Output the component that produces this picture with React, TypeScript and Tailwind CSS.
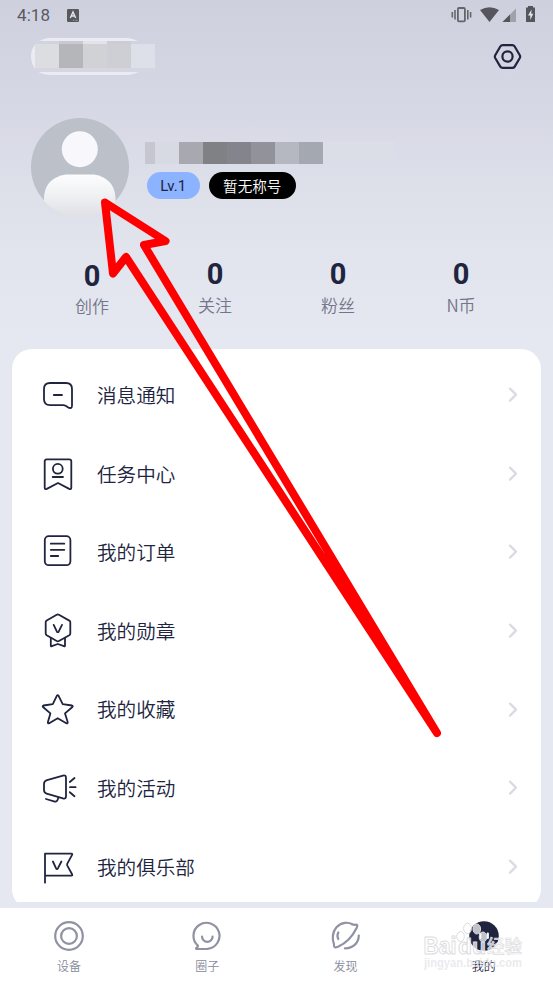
import type { ReactNode } from "react";

const INK = "#20243f";

const stats = [
  { value: "0", label: "创作", shift: "pt-[1.500px]" },
  { value: "0", label: "关注", shift: "" },
  { value: "0", label: "粉丝", shift: "" },
  { value: "0", label: "N币", shift: "" },
];

const menu: { label: string; icon: ReactNode }[] = [
  {
    label: "消息通知",
    icon: (
      <>
        <path d="M12 8H28Q34 8 34 14V30.7Q34 34 30.3 32.6L27.6 30.8Q26.6 30.2 25.3 30.2H12Q6 30.2 6 24.2V14Q6 8 12 8Z" />
        <path d="M15.8 20H24" />
      </>
    ),
  },
  {
    label: "任务中心",
    icon: (
      <>
        <path d="M8.7 5.3H31.3Q33.3 5.3 33.3 7.3V33.4Q33.3 35.8 31.2 34.9L20 29L8.8 34.9Q6.7 35.8 6.7 33.4V7.3Q6.7 5.3 8.7 5.3Z" />
        <circle cx="19.8" cy="14.8" r="4.9" />
        <path d="M14.7 23H25" />
      </>
    ),
  },
  {
    label: "我的订单",
    icon: (
      <>
        <rect x="6.8" y="4.2" width="25.6" height="29" rx="4" />
        <path d="M12.8 11.7H26.3M12.8 17.8H26.3M12.8 24H20.2" />
      </>
    ),
  },
  {
    label: "我的勋章",
    icon: (
      <>
        <path d="M18.7 3.8Q19.8 3.2 20.9 3.8L31.3 9.6Q32.3 10.2 32.3 11.3V22.6Q32.3 23.7 31.3 24.3L20.9 30Q19.8 30.6 18.7 30L8.7 24.3Q7.7 23.7 7.7 22.6V11.3Q7.7 10.2 8.7 9.6Z" />
        <path d="M15.7 13.9L18.8 20.4Q19.8 22 20.8 20.4L24 13.9M12.8 27V34.8Q12.8 35.6 13.8 35.2L19.8 33L26 35.2Q27 35.6 27 34.8V27" />
      </>
    ),
  },
  {
    label: "我的收藏",
    icon: (
      <path d="M18.8 5.8Q19.7 4.6 20.6 5.8L24.7 14.1L34 15.5Q35.3 16 34.4 17L27 23.4L29.7 32.1Q29.8 33.8 28.3 33.2L19.7 28.2L11.2 33.2Q9.7 33.8 9.9 32.1L12.4 23.4L5 17Q4.2 16 5.4 15.5L14.8 14.1Z" />
    ),
  },
  {
    label: "我的活动",
    icon: (
      <>
        <path d="M6 16Q6 13 9 12.1L25 7.6Q28 6.9 28 9.8V28.2Q28 31.2 25 30.4L8.6 25.6Q6 24.8 6 22Z" />
        <path d="M8 31L16.8 33.6Q19.4 34.2 20.3 29.6M31.8 14L36.5 10M32 19.2H37.6M31.8 24.2L36.5 28.2" />
      </>
    ),
  },
  {
    label: "我的俱乐部",
    icon: (
      <>
        <path d="M7 35.7V6.7H33.4Q34.7 6.7 34.1 7.9L29.3 16.6Q28.9 17.6 29.3 18.6L34.1 27.3Q34.7 28.6 33.4 28.6H7" />
        <path d="M14.9 14.5L18 21.2Q19 22.9 20 21.2L23.4 14.5" />
      </>
    ),
  },
];

const tabs: { label: string; icon: ReactNode; active?: boolean }[] = [
  {
    label: "设备",
    icon: (
      <>
        <circle cx="15" cy="15" r="13.8" />
        <circle cx="15" cy="15" r="7.9" />
      </>
    ),
  },
  {
    label: "圈子",
    icon: (
      <>
        <path d="M5.9 24.6A13 13 0 1 1 15.4 27.8L4.6 28Q3.4 27.4 4.7 26.6Q6.2 25.8 5.9 24.6Z" />
        <path d="M10 15.6A5.3 5.3 0 0 0 20.6 15.6" />
      </>
    ),
  },
  {
    label: "发现",
    icon: (
      <>
        <path d="M24.9 3.700C26.600 3.500 26.600 4.800 25.600 7C21.500 15.400 15.400 22 7 25.800C3.500 27 2.500 26.300 3 23.300C.900 18.500 1.300 10.800 5.500 6.200C10.500 .900 17.600 1 21.200 3.200Q22.500 4 24.900 3.700Z" />
        <path d="M7.300 11.500Q5.600 14.800 7.300 18.100M27.800 14.500C27.600 22.500 21.800 27.400 13.900 27.300" />
      </>
    ),
  },
  {
    label: "我的",
    active: true,
    icon: (
      <>
        <circle cx="15" cy="15" r="14.8" fill={INK} stroke="none" />
        <path d="M11.2 12.5V17M18.8 12.5V17" stroke="#fff" />
      </>
    ),
  },
];

function StatusBar() {
  return (
    <div className="flex h-[30px] items-center pl-[17px] pr-[17px] font-[Roboto,sans-serif] font-normal text-[#58595f]">
      <span className="w-[50px] pt-px text-[17px] leading-none tracking-[0.1px]">4:18</span>
      <svg className="h-[13px] w-[12px]" viewBox="0 0 12 13">
        <rect width="12" height="13" rx="1.2" fill="#58595f" />
        <path d="M3.3 9L6 3L8.7 9M4.3 7H7.7" fill="none" stroke="#e3e4ec" strokeWidth="1.4" />
        <path d="M6 11.3H7.2M8.5 11.3H10.4" stroke="#b5b6bf" strokeWidth=".8" />
      </svg>
      <svg className="ml-auto h-[18px] w-[86px]" viewBox="450 6 86 18">
        <rect x="457.9" y="8" width="7" height="13.3" rx="1" fill="none" stroke="#65666c" strokeWidth="1.8" />
        <path d="M455 10V19.5M452.3 12V17.4M467.8 10V19.5M470.6 12V17.4" stroke="#65666c" strokeWidth="1.6" />
        <path d="M480 10Q489.500 4.300 499 10L489.500 22Z" fill="#55565b" />
        <path d="M502.500 22L516 8.500V22Z" fill="#a0a1ab" />
        <path d="M502.500 22L510 14.500V22Z" fill="#55565b" />
        <path d="M528 6H533V7.500H535V22H526V7.500H528Z" fill="#55565b" />
        <path d="M531.600 9.500L528 15.600H530.300V20L533.300 13.700H531.200Z" fill="#e3e4ec" />
      </svg>
    </div>
  );
}

function Header() {
  return (
    <div className="flex h-[54px] items-start justify-between pl-[31px] pr-[31px] pt-2">
      <div className="flex h-[37px] w-[124px] items-center bg-[linear-gradient(#eaebf3,#eaebf3)] bg-[length:117px_37px] bg-no-repeat [clip-path:path('M17_0H97Q103_1_107_3H124V34H108Q104_36_98_37H19C6_37_0_28_0_18C0_10_5_2_17_0Z')]">
        <div className="ml-1 flex h-[31px] w-full flex-col bg-[#d2d3e0]">
          <div className="flex h-[3px]">
            <i className="w-[24px]" />
            <i className="w-[24px] bg-[#c8c9d3]" />
            <i className="w-[24px] bg-[#e2e3ea]" />
            <i className="w-[24px] bg-[#cbccd8]" />
          </div>
          <div className="flex h-[24px]">
            <i className="w-[24px] bg-[#dcdde1]" />
            <i className="w-[24px] bg-[#b5b6ba]" />
            <i className="w-[24px] bg-[#d1d2d6]" />
            <i className="w-[24px] bg-[#cecfd4]" />
            <i className="w-[24px] bg-[#dde0e9]" />
          </div>
          <div className="h-1 bg-[#d5d6e2]" />
        </div>
      </div>
      <svg className="mt-1 h-[30px] w-[30px]" viewBox="0 0 30 30" fill="none" stroke={INK} strokeWidth="2.2" strokeLinejoin="round">
        <path d="M10.700 3.200H20.300Q21.900 3.200 22.700 4.500L27.800 13.200Q28.500 14.600 27.800 16L22.700 24.600Q21.900 25.900 20.300 25.900H10.700Q9.100 25.900 8.300 24.600L3.200 16Q2.500 14.600 3.200 13.200L8.300 4.500Q9.100 3.200 10.700 3.200Z" />
        <circle cx="15.500" cy="14.500" r="5.100" />
      </svg>
    </div>
  );
}

function Profile() {
  return (
    <div className="flex h-[132px] pl-[31px] pt-[34px]">
      <svg className="h-[98px] w-[98px] shrink-0" viewBox="0 0 98 98">
        <defs>
          <linearGradient id="torso" x1="0" y1="0" x2="0" y2="1">
            <stop offset="0" stopColor="#fdfdfe" />
            <stop offset=".45" stopColor="#f1f2f4" />
            <stop offset="1" stopColor="#e0e1e5" />
          </linearGradient>
          <clipPath id="disc"><circle cx="49" cy="49" r="49.500" /></clipPath>
        </defs>
        <circle cx="49" cy="49" r="49" fill="#bbc0c9" />
        <circle cx="48.800" cy="31.200" r="18" fill="#f8f8fc" />
        <path d="M13 98V79Q14 60 35 56.500H63Q83 60 84.500 79V98Z" fill="url(#torso)" clipPath="url(#disc)" />
      </svg>
      <div className="ml-4 flex flex-col pt-6">
        <div className="flex h-[22px]">
          <i className="w-[10px] bg-[#c6c6d0]" />
          <i className="w-[24px] bg-[#d7dae2]" />
          <i className="w-[24px] bg-[#a8a8b1]" />
          <i className="w-[24px] bg-[#808185]" />
          <i className="w-[24px] bg-[#84848d]" />
          <i className="w-[24px] bg-[#92929b]" />
          <i className="w-[24px] bg-[#b5b8c1]" />
          <i className="w-[24px] bg-[#a4a8b0]" />
          <i className="w-[72px] bg-[#dbdee7]" />
        </div>
        <div className="ml-[2px] mt-2 flex gap-[9.500px]">
          <span className="flex h-[27px] w-[52.500px] items-center justify-center rounded-full bg-[#8cb3ff] pt-[2px] font-[Roboto,sans-serif] text-[15px] font-normal leading-none text-[#20243f]">Lv.1</span>
          <span className="flex h-[27px] w-[86.500px] items-center justify-center rounded-full bg-black pt-px text-[14.600px] leading-none text-white">暂无称号</span>
        </div>
      </div>
    </div>
  );
}

function Watermark() {
  return (
    <svg className="pointer-events-none absolute left-[418px] top-[918px] h-[56px] w-[112px]" viewBox="418 918 112 56">
      <g fill="#fff" fillOpacity=".72" stroke="#dcdce0" strokeWidth="1" fontFamily="'Liberation Sans', 'Noto Sans CJK SC', sans-serif" fontWeight="700">
        <text x="423.500" y="954" fontSize="24" textLength="33" lengthAdjust="spacingAndGlyphs">Bai</text>
        <text x="458" y="954" fontSize="22" textLength="28" lengthAdjust="spacingAndGlyphs">du</text>
        <text x="487" y="953" fontSize="18" fontWeight="500" strokeWidth=".7" textLength="35" lengthAdjust="spacingAndGlyphs">经验</text>
        <ellipse cx="460.500" cy="936.500" rx="3.800" ry="5" />
        <ellipse cx="467.500" cy="928.500" rx="3.900" ry="5.200" />
        <ellipse cx="476.800" cy="929" rx="3.800" ry="5" />
        <ellipse cx="483" cy="937" rx="3.800" ry="5" />
      </g>
      <text x="424" y="967" fill="#e4e4e8" fillOpacity=".75" fontFamily="'Liberation Sans', sans-serif" fontSize="12" fontWeight="700" textLength="98" lengthAdjust="spacingAndGlyphs">jingyan.baidu.com</text>
    </svg>
  );
}

export default function App() {
  return (
    <div className="relative flex h-[983px] w-[553px] flex-col overflow-hidden bg-[#e5e8f0] bg-[linear-gradient(#cfd0de_0px,#d7d8e5_110px,#e1e4ec_240px,#e5e8f0_340px)] font-['Noto_Sans_CJK_SC_DemiLight','Noto_Sans_CJK_SC',sans-serif] font-[350]">
      <StatusBar />
      <Header />
      <Profile />
      <div className="ml-[30.500px] grid h-[133px] w-[492px] grid-cols-4 pt-[43px]">
        {stats.map((s) => (
          <div key={s.label} className={`flex flex-col items-center ${s.shift}`}>
            <span className="font-[Roboto,sans-serif] text-[29px] font-bold leading-[30px] text-[#20243f]">{s.value}</span>
            <span className="mt-[3.500px] text-[17px] leading-[24px] text-[#74758a]">{s.label}</span>
          </div>
        ))}
      </div>
      <main className="mx-3 h-[553px] shrink-0 overflow-hidden">
        <div className="h-[560px] rounded-[20px] bg-white pt-[7px]">
          {menu.map((m) => (
            <div key={m.label} className="flex h-[78.600px] items-center pl-[26px] pr-[23px]">
              <svg className="h-10 w-10" viewBox="0 0 40 40" fill="none" stroke={INK} strokeWidth="1.8" strokeLinecap="round" strokeLinejoin="round">{m.icon}</svg>
              <span className="ml-[19px] pb-px text-[19.600px] leading-none text-[#20243f]">{m.label}</span>
              <svg className="ml-auto h-4 w-[10px]" viewBox="0 0 10 16" fill="none" stroke="#dadbe2" strokeWidth="2.200" strokeLinecap="round" strokeLinejoin="round">
                <path d="M2 1.600L8 7.600L2 13.600" />
              </svg>
            </div>
          ))}
        </div>
      </main>
      <nav className="mt-[6px] grid h-[75px] shrink-0 grid-cols-4 bg-white">
        {tabs.map((t) => (
          <div key={t.label} className="flex flex-col items-center pt-[12.700px]">
            <svg className="h-[30px] w-[30px]" viewBox="0 0 30 30" fill="none" stroke="#9092a2" strokeWidth="2.200" strokeLinecap="round" strokeLinejoin="round">{t.icon}</svg>
            <span className={`mt-[6px] text-[12px] leading-[18px] ${t.active ? "text-[#20243f]" : "text-[#888a9b]"}`}>{t.label}</span>
          </div>
        ))}
      </nav>
      <Watermark />
      <svg className="pointer-events-none absolute inset-0 h-[983px] w-[553px]" viewBox="0 0 553 983">
        <path d="M105 202.500L165.500 241L144 245L437 733L126 257L113 273.500Z" fill="none" stroke="#f00" strokeWidth="8" strokeLinejoin="round" />
      </svg>
    </div>
  );
}
